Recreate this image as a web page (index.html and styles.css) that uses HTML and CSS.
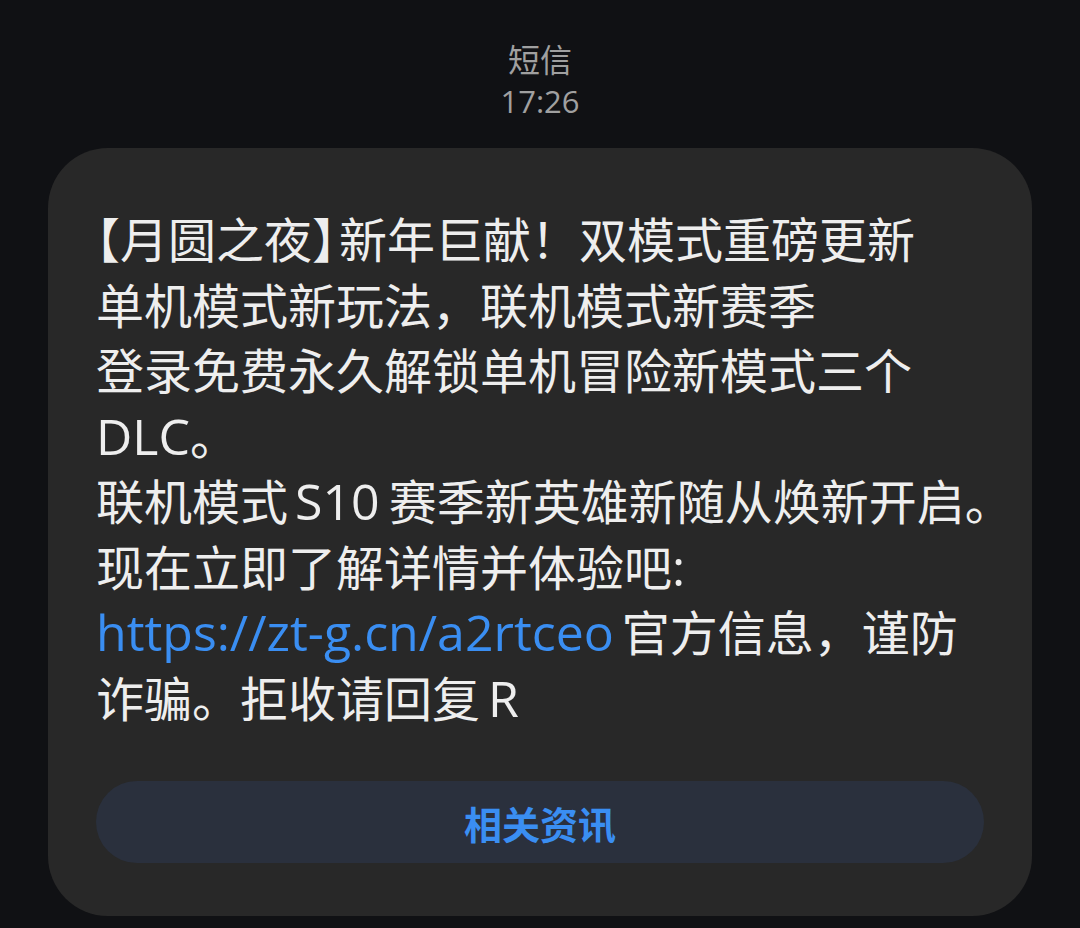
FILE: index.html
```html
<!DOCTYPE html>
<html lang="zh-CN">
<head>
<meta charset="utf-8">
<link rel="stylesheet" href="styles.css">
</head>
<body>
<div class="page">
  <header class="meta">
    <div class="sender">短信</div>
    <div class="time">17:26</div>
  </header>
  <section class="bubble">
    <p class="msg"><span class="line"><span class="halt">【</span>月圆之夜<span class="halt">】</span>新年巨献！双模式重磅更新</span><span class="line">单机模式新玩法，联机模式新赛季</span><span class="line">登录免费永久解锁单机冒险新模式三个</span><span class="line"><span class="lat">DLC</span>。</span><span class="line">联机模式<span class="lat gap">S10</span>赛季新英雄新随从焕新开启。</span><span class="line">现在立即了解详情并体验吧<span class="lat">:</span></span><span class="line"><a class="link lat">https://zt-g.cn/a2rtceo</a><span class="gap-l"></span>官方信息，谨防</span><span class="line">诈骗。拒收请回复<span class="lat gap-left">R</span></span></p>
    <button class="action">相关资讯</button>
  </section>
</div>
</body>
</html>
```
FILE: styles.css
```css
html, body {
  margin: 0;
  padding: 0;
  background: #101114;
}
.page {
  width: 1080px;
  height: 928px;
  box-sizing: border-box;
  padding: 37px 48px 0 48px;
  font-family: "Noto Sans CJK SC", sans-serif;
}
.meta {
  display: flex;
  flex-direction: column;
  align-items: center;
  color: #a0a0a0;
  font-size: 32px;
  line-height: 43px;
  margin-bottom: 25px;
}
.time {
  font-family: "Open Sans", sans-serif;
  font-size: 31px;
}
.bubble {
  background: #282828;
  border-radius: 60px;
  padding: 57px 48px 53px 48px;
  display: flex;
  flex-direction: column;
}
.msg {
  margin: 0;
  color: #eeeeee;
  font-size: 48px;
  line-height: 65.5px;
  display: flex;
  flex-direction: column;
}
.line {
  white-space: nowrap;
  height: 65.5px;
}
.halt {
  font-feature-settings: "halt" 1;
}
.halt + .halt,
.line > .halt:nth-child(2) {
  margin-right: 3px;
}
.lat {
  font-family: "Open Sans", sans-serif;
  font-size: 50px;
  line-height: 0;
}
.gap {
  margin: 0 9px 0 7px;
}
.gap-l {
  display: inline-block;
  width: 8px;
}
.gap-left {
  margin-left: 8px;
}
.link {
  color: #3a8ef2;
}
.action {
  margin-top: 52px;
  height: 82px;
  border: none;
  border-radius: 41px;
  background: #2a303d;
  color: #3a8ef2;
  font-family: "Noto Sans CJK SC", sans-serif;
  font-weight: 700;
  font-size: 38px;
  padding: 0;
}
```
